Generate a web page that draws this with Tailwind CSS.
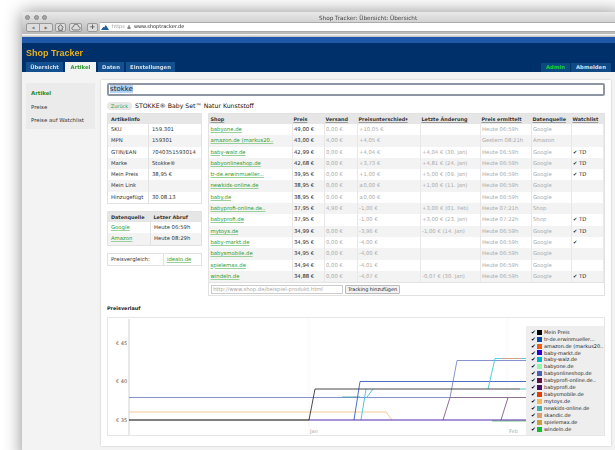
<!DOCTYPE html>
<html lang="de">
<head>
  <meta charset="UTF-8">
  <title>Shop Tracker</title>
  <script src="https://cdn.jsdelivr.net/npm/@tailwindcss/browser@4"></script>
</head>
<body class="bg-white overflow-hidden">
  <div class="w-[615px] h-[450px] overflow-hidden pl-[22px] pt-[12px] font-['DejaVu_Sans',sans-serif] text-[5.3px] text-[#333] blur-[0.45px]">
    <!-- browser window -->
    <div class="w-[600px] h-[450px] bg-white shadow-[0_0_18px_rgba(0,0,0,0.45)] rounded-t-[3px]">
      <!-- title bar + toolbar -->
      <div class="h-[22px] bg-gradient-to-b from-[#e9e9e9] to-[#b9b9b9] rounded-t-[3px] relative">
        <div class="flex gap-[3.5px] pl-[3px] pt-[3px]">
          <span class="w-[5px] h-[5px] rounded-full bg-[#a5a5a5] border border-[#8a8a8a]"></span>
          <span class="w-[5px] h-[5px] rounded-full bg-[#a5a5a5] border border-[#8a8a8a]"></span>
          <span class="w-[5px] h-[5px] rounded-full bg-[#a5a5a5] border border-[#8a8a8a]"></span>
        </div>
        <div class="absolute left-[297px] top-[2px] text-[#444] text-[5.7px]">Shop Tracker: Übersicht: Übersicht</div>
        <div class="flex items-center mt-[2px] pl-[4px] h-[10px]">
          <div class="w-[27px] h-[9px] flex border border-[#999] rounded-[2px] bg-[#ddd]">
            <span class="flex-1 border-r border-[#999] text-center text-[4px] leading-[7px] text-[#888]">◀</span>
            <span class="flex-1 text-center text-[4px] leading-[7px] text-[#777]">▶</span>
          </div>
          <div class="w-[11px] h-[9px] ml-[2px] border border-[#999] rounded-[2px] bg-[#ddd] flex items-center justify-center">
            <svg viewBox="0 0 10 10" class="w-[7px] h-[7px]"><path d="M1 5 5 1l4 4M2.5 5v4h5V5" fill="none" stroke="#555" stroke-width="1.3"/></svg>
          </div>
          <div class="w-[13px] h-[9px] ml-[3px] border border-[#999] rounded-[2px] bg-[#ddd] flex items-center justify-center">
            <svg viewBox="0 0 12 8" class="w-[10px] h-[7px]"><path d="M3 7a2 2 0 0 1 0-4 3 3 0 0 1 6 0 2 2 0 0 1 0 4z" fill="none" stroke="#666" stroke-width="1"/></svg>
          </div>
          <div class="w-[11px] h-[9px] ml-[5px] border border-[#999] rounded-[2px] bg-[#ddd] text-center text-[7px] leading-[7px] font-bold text-[#555]">+</div>
          <div class="flex-1 h-[10px] ml-[2px] bg-white border-y border-[#aaa] flex items-center text-[5px]">
            <svg viewBox="0 0 10 6" class="w-[8px] h-[5px] ml-[1px]"><path d="M0 6 3 2l1 1 2-3 4 6z" fill="#1c5f9a"/></svg>
            <span class="ml-[3px] text-[#999]">https</span>
            <svg viewBox="0 0 6 6" class="w-[4px] h-[4px] ml-[2px]"><path d="M1 3h4v3H1zM2 3V1.5a1 1 0 0 1 2 0V3" fill="#888" stroke="#888" stroke-width=".5"/></svg>
            <span class="ml-[3px] text-[#222]">www.shoptracker.de</span>
          </div>
        </div>
      </div>
      <div class="h-[3px] bg-gradient-to-b from-white to-[#bbb]"></div>

      <!-- site header -->
      <div class="h-[6px] bg-[#1f58a8]"></div>
      <div class="h-[29px] bg-[#00306a] relative">
        <div class="absolute left-[4px] top-[4px] text-[9px] font-bold text-[#e8b01c] font-['Liberation_Sans',sans-serif]">Shop Tracker</div>
        <div class="absolute bottom-0 left-[4px] flex gap-[2px] text-[5.3px] leading-[10px] font-semibold text-[#d5dfeb] text-center">
          <span class="w-[37px] h-[10px] bg-[#12508f]">Übersicht</span>
          <span class="w-[31px] h-[10px] bg-[#f3f3f3] text-[#2a9a2a]">Artikel</span>
          <span class="w-[26px] h-[10px] bg-[#12508f]">Daten</span>
          <span class="w-[49px] h-[10px] bg-[#12508f]">Einstellungen</span>
        </div>
        <div class="absolute bottom-0 right-[11px] flex gap-[1px] text-[5.3px] leading-[9px] font-semibold text-center">
          <span class="w-[29px] h-[9px] bg-[#0a4a80] text-[#18d038]">Admin</span>
          <span class="w-[40px] h-[9px] bg-[#0f4a84] text-[#d5dfeb]">Abmelden</span>
        </div>
      </div>

      <!-- page -->
      <div class="bg-[#f3f3f3] h-[380px] flex pl-[4px] pr-[4px] pt-[8px] items-start">
        <div class="w-[69px] h-[46px] mt-[3px] bg-[#ebebeb] pl-[5px] pt-[6px] flex flex-col gap-[5.5px] leading-[8px] text-[5.4px]">
          <span class="font-bold text-[#2a8a2a]">Artikel</span>
          <span>Preise</span>
          <span>Preise auf Watchlist</span>
        </div>

        <main class="w-[510px] h-[366px] ml-[6px] bg-white shadow-[0_0_2px_rgba(0,0,0,0.2)] px-[6px] pt-[3px]">
          <div class="h-[13px] border-2 border-[#8f96a3] rounded-[2px] pl-[1px] text-[7px] leading-[9px] text-[#222]"><span class="bg-[#b5d3f5]">stokke</span></div>
          <div class="flex items-center h-[9px] mt-[5px]">
            <span class="w-[25px] h-[8px] rounded-[4px] bg-[#e8e8e8] text-center text-[5px] leading-[8px] text-[#3aa03a]">Zurück</span>
            <span class="ml-[3px] text-[6.2px] font-medium text-[#111]">STOKKE® Baby Set™ Natur Kunststoff</span>
          </div>

          <div class="flex items-start mt-[3px]">
            <!-- left tables -->
            <div class="w-[95px] flex flex-col gap-[7px]">
              <table class="w-full table-fixed border border-[#e2e2e2] leading-[11.3px] [&_th]:text-left [&_th]:text-[4.9px] [&_th]:pl-[3px] [&_th]:bg-[#e6e6e6] [&_th]:leading-[10px] [&_td]:pl-[3px] [&_td:first-child]:border-r [&_td]:border-[#e2e2e2]">
                <colgroup><col class="w-[41px]"><col></colgroup>
                <thead><tr><th colspan="2">Artikelinfo</th></tr></thead>
                <tbody class="[&_tr:nth-child(even)]:bg-[#f3f3f3]">
                  <tr><td>SKU</td><td>159.301</td></tr>
                  <tr><td>MPN</td><td>159301</td></tr>
                  <tr><td>GTIN/EAN</td><td>7040351593014</td></tr>
                  <tr><td>Marke</td><td>Stokke®</td></tr>
                  <tr><td>Mein Preis</td><td>38,95 €</td></tr>
                  <tr><td>Mein Link</td><td></td></tr>
                  <tr><td>Hinzugefügt</td><td>30.08.13</td></tr>
                </tbody>
              </table>
              <table class="w-full table-fixed border border-[#e2e2e2] leading-[11.3px] [&_th]:text-left [&_th]:text-[4.9px] [&_th]:pl-[3px] [&_th]:bg-[#e6e6e6] [&_th]:leading-[10px] [&_td]:pl-[3px] [&_td:first-child]:border-r [&_td]:border-[#e2e2e2]">
                <colgroup><col class="w-[43px]"><col></colgroup>
                <thead><tr><th>Datenquelle</th><th>Letzer Abruf</th></tr></thead>
                <tbody class="[&_tr:nth-child(even)]:bg-[#f3f3f3]">
                  <tr><td><a class="underline decoration-[#9ad09a] text-[#2c9a2c]">Google</a></td><td>Heute 06:59h</td></tr>
                  <tr><td><a class="underline decoration-[#9ad09a] text-[#2c9a2c]">Amazon</a></td><td>Heute 08:29h</td></tr>
                </tbody>
              </table>
              <table class="w-full table-fixed border border-[#e2e2e2] leading-[11px] [&_td]:pl-[3px] [&_td:first-child]:border-r [&_td]:border-[#e2e2e2]">
                <colgroup><col class="w-[56px]"><col></colgroup>
                <tbody><tr><td>Preisvergleich:</td><td><a class="underline decoration-[#9ad09a] text-[#2c9a2c]">idealo.de</a></td></tr></tbody>
              </table>
            </div>

            <!-- shop table -->
            <div class="w-[397px] ml-[6px] border border-[#e2e2e2]">
              <table class="w-full table-fixed leading-[11.3px] text-[#aaa] [&_th]:text-left [&_th]:text-[4.9px] [&_th]:pl-[1.5px] [&_th]:bg-[#e6e6e6] [&_th]:leading-[10px] [&_th]:text-[#333] [&_th]:underline [&_th]:decoration-[#999] [&_td]:pl-[1.5px] [&_td]:border-r [&_td]:border-[#e8e8e8] [&_td:nth-child(1)_a]:underline [&_td:nth-child(1)_a]:decoration-[#9ad09a] [&_td:nth-child(1)_a]:text-[#2c9a2c] [&_td:nth-child(2)]:text-[#222]">
                <colgroup><col class="w-[83px]"><col class="w-[32px]"><col class="w-[33px]"><col class="w-[63px]"><col class="w-[60px]"><col class="w-[51px]"><col class="w-[40px]"><col></colgroup>
                <thead>
                  <tr><th>Shop</th><th>Preis</th><th>Versand</th><th>Preisunterschied▾</th><th>Letzte Änderung</th><th>Preis ermittelt</th><th>Datenquelle</th><th>Watchlist</th></tr>
                </thead>
                <tbody class="[&_tr:nth-child(even)]:bg-[#f3f3f3] [&_td:nth-child(8)]:text-[#222]">
                  <tr><td><a>babyone.de</a></td><td>49,00 €</td><td>0,00 €</td><td>+10,05 €</td><td></td><td>Heute 06:59h</td><td>Google</td><td></td></tr>
                  <tr><td><a>amazon.de (markus20..</a></td><td>43,00 €</td><td>4,00 €</td><td>+4,05 €</td><td></td><td>Gestern 08:21h</td><td>Amazon</td><td></td></tr>
                  <tr><td><a>baby-walz.de</a></td><td>42,99 €</td><td>0,00 €</td><td>+4,04 €</td><td>+4,04 € (30. Jan)</td><td>Heute 06:59h</td><td>Google</td><td>✔ TD</td></tr>
                  <tr><td><a>babyonlineshop.de</a></td><td>42,68 €</td><td>0,00 €</td><td>+3,73 €</td><td>+4,81 € (24. Jan)</td><td>Heute 06:59h</td><td>Google</td><td>✔ TD</td></tr>
                  <tr><td><a>tr-de.erwinmueller...</a></td><td>39,95 €</td><td>0,00 €</td><td>+1,00 €</td><td>+5,00 € (09. Jan)</td><td>Heute 06:59h</td><td>Google</td><td>✔ TD</td></tr>
                  <tr><td><a>newkids-online.de</a></td><td>38,95 €</td><td>0,00 €</td><td>±0,00 €</td><td>+1,00 € (11. Jan)</td><td>Heute 06:59h</td><td>Google</td><td></td></tr>
                  <tr><td><a>baby.de</a></td><td>38,95 €</td><td>0,00 €</td><td>±0,00 €</td><td></td><td>Heute 06:59h</td><td>Google</td><td></td></tr>
                  <tr><td><a>babyprofi-online.de..</a></td><td>37,95 €</td><td>4,90 €</td><td>-1,00 €</td><td>+3,00 € (01. Feb)</td><td>Heute 07:21h</td><td>Shop</td><td></td></tr>
                  <tr><td><a>babyprofi.de</a></td><td>37,95 €</td><td></td><td>-1,00 €</td><td>+3,00 € (23. Jan)</td><td>Heute 07:22h</td><td>Shop</td><td>✔ TD</td></tr>
                  <tr><td><a>mytoys.de</a></td><td>34,99 €</td><td>0,00 €</td><td>-3,96 €</td><td>-1,00 € (14. Jan)</td><td>Heute 06:59h</td><td>Google</td><td>✔ TD</td></tr>
                  <tr><td><a>baby-markt.de</a></td><td>34,95 €</td><td>0,00 €</td><td>-4,00 €</td><td></td><td>Heute 06:59h</td><td>Google</td><td>✔</td></tr>
                  <tr><td><a>babysmobile.de</a></td><td>34,95 €</td><td>0,00 €</td><td>-4,00 €</td><td></td><td>Heute 06:59h</td><td>Google</td><td></td></tr>
                  <tr><td><a>spielemax.de</a></td><td>34,94 €</td><td>0,00 €</td><td>-4,01 €</td><td></td><td>Heute 06:59h</td><td>Google</td><td></td></tr>
                  <tr><td><a>windeln.de</a></td><td>34,88 €</td><td>0,00 €</td><td>-4,07 €</td><td>-0,07 € (30. Jan)</td><td>Heute 06:59h</td><td>Google</td><td>✔ TD</td></tr>
                </tbody>
              </table>
              <div class="h-[13px] border-t border-[#e2e2e2] flex items-center pl-[2px]">
                <div class="w-[132px] h-[9px] border border-[#ccc] text-[#aaa] leading-[7px] pl-[1px] whitespace-nowrap">http://www.shop.de/beispiel-produkt.html</div>
                <div class="w-[55px] h-[9px] ml-[2px] border border-[#bbb] rounded-[1px] bg-[#f2f2f2] text-center text-[4.9px] leading-[7px] text-[#222] whitespace-nowrap">Tracking hinzufügen</div>
              </div>
            </div>
          </div>

          <div class="mt-[8px] h-[8px] leading-[8px] font-semibold text-[#222] text-[4.9px]">Preisverlauf</div>
          <!-- chart -->
          <div class="relative mt-[5px] w-[498px] h-[119px] border border-[#e6e6e6]">
            <svg viewBox="108 318 496 117" class="w-full h-full" fill="none" stroke-width="0.9">
              <path d="M129 319V435" stroke="#ccc"/>
              <path d="M309 319V435M507 319V435" stroke="#e8e8e8" stroke-width=".6" stroke-dasharray="1 1"/>
              <path d="M129 412H386L392 420" stroke="#f0c48a"/>
              <path d="M129 397.5H450L457 360.5H527" stroke="#7788c8"/>
              <path d="M342 397H360" stroke="#4a9fb0"/>
              <path d="M354 420 360 381.5H527" stroke="#3a5fc0"/>
              <path d="M361 420 366 389M367 397 373 389" stroke="#40c0d8"/>
              <path d="M488 389 495 358.5H527" stroke="#40c8d8"/>
              <path d="M502 358.5H521" stroke="#e0a080"/>
              <path d="M443 420 450 397.5H527M501 420 508 397.5" stroke="#806088"/>
              <path d="M492 421H527" stroke="#60c070"/>
              <path d="M309 420H527" stroke="#4010a0"/>
              <path d="M309 420 315 389H520" stroke="#333"/>
              <path d="M520 389H527" stroke="#40c0b8"/>
              <path d="M129 420H309" stroke="#000" stroke-width="1.1"/>
              <g fill="#555" stroke="none" font-size="5">
                <text x="116" y="345">€ 45</text>
                <text x="116" y="383">€ 40</text>
                <text x="116" y="422">€ 35</text>
              </g>
              <g fill="#aaa" stroke="none" font-size="5">
                <text x="310" y="433">Jan</text>
                <text x="509" y="433">Feb</text>
              </g>
            </svg>
            <!-- legend -->
            <div class="absolute right-0 bottom-0 w-[78px] h-[109px] bg-[#eeeeee] pl-[5px] pt-[2.5px] text-[#222] leading-[6.95px] text-[5px]">
              <div class="flex items-center"><span class="w-[4px] text-[5.5px] text-black">✔</span><span class="w-[5px] h-[5px] bg-[#000] mx-[2px]"></span>Mein Preis</div>
              <div class="flex items-center"><span class="w-[4px] text-[5.5px] text-black">✔</span><span class="w-[5px] h-[5px] bg-[#0a4aa8] mx-[2px]"></span>tr-de.erwinmueller...</div>
              <div class="flex items-center"><span class="w-[4px] text-[5.5px] text-black">✔</span><span class="w-[5px] h-[5px] bg-[#f06010] mx-[2px]"></span>amazon.de (markus20..</div>
              <div class="flex items-center"><span class="w-[4px] text-[5.5px] text-black">✔</span><span class="w-[5px] h-[5px] bg-[#3000d0] mx-[2px]"></span>baby-markt.de</div>
              <div class="flex items-center"><span class="w-[4px] text-[5.5px] text-black">✔</span><span class="w-[5px] h-[5px] bg-[#00b8c8] mx-[2px]"></span>baby-walz.de</div>
              <div class="flex items-center"><span class="w-[4px] text-[5.5px] text-black">✔</span><span class="w-[5px] h-[5px] bg-[#90f8a8] mx-[2px]"></span>babyone.de</div>
              <div class="flex items-center"><span class="w-[4px] text-[5.5px] text-black">✔</span><span class="w-[5px] h-[5px] bg-[#4a60b0] mx-[2px]"></span>babyonlineshop.de</div>
              <div class="flex items-center"><span class="w-[4px] text-[5.5px] text-black">✔</span><span class="w-[5px] h-[5px] bg-[#601040] mx-[2px]"></span>babyprofi-online.de..</div>
              <div class="flex items-center"><span class="w-[4px] text-[5.5px] text-black">✔</span><span class="w-[5px] h-[5px] bg-[#481060] mx-[2px]"></span>babyprofi.de</div>
              <div class="flex items-center"><span class="w-[4px] text-[5.5px] text-black">✔</span><span class="w-[5px] h-[5px] bg-[#e04000] mx-[2px]"></span>babysmobile.de</div>
              <div class="flex items-center"><span class="w-[4px] text-[5.5px] text-black">✔</span><span class="w-[5px] h-[5px] bg-[#f0b860] mx-[2px]"></span>mytoys.de</div>
              <div class="flex items-center"><span class="w-[4px] text-[5.5px] text-black">✔</span><span class="w-[5px] h-[5px] bg-[#40b0b0] mx-[2px]"></span>newkids-online.de</div>
              <div class="flex items-center"><span class="w-[4px] text-[5.5px] text-black">✔</span><span class="w-[5px] h-[5px] bg-[#d8a070] mx-[2px]"></span>skandic.de</div>
              <div class="flex items-center"><span class="w-[4px] text-[5.5px] text-black">✔</span><span class="w-[5px] h-[5px] bg-[#c8a040] mx-[2px]"></span>spielemax.de</div>
              <div class="flex items-center"><span class="w-[4px] text-[5.5px] text-black">✔</span><span class="w-[5px] h-[5px] bg-[#10c030] mx-[2px]"></span>windeln.de</div>
            </div>
          </div>
        </main>
      </div>
    </div>
  </div>
</body>
</html>
